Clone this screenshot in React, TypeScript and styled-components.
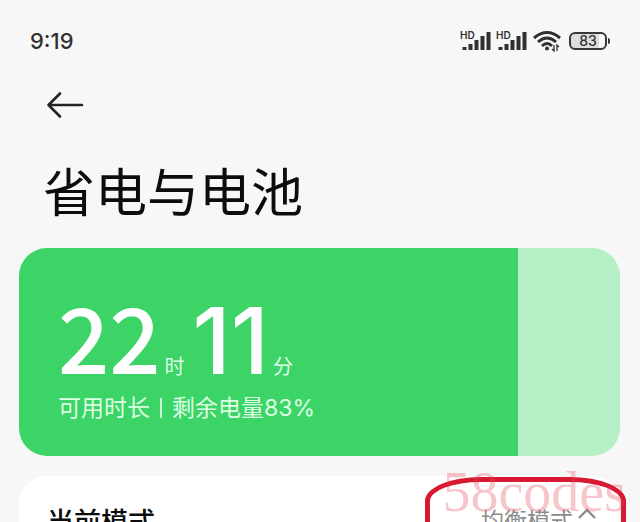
import React from "react";
import styled, { createGlobalStyle } from "styled-components";

const GlobalStyle = createGlobalStyle`
  * { box-sizing: border-box; }
  body { margin: 0; background: #f7f7f7; }
  button { border: 0; padding: 0; background: none; font: inherit; color: inherit; cursor: pointer; }
`;

const Page = styled.main`
  height: 100vh;
  overflow: hidden;
  background: #f7f7f7;
  color: #0c0c0c;
  font-family: "Noto Sans CJK SC", sans-serif;
`;

const StatusBar = styled.header`
  display: flex;
  align-items: center;
  justify-content: space-between;
  padding: 28px 30px 0;
  height: 54px;
  color: #303030;
`;

const Clock = styled.time`
  font: 500 22px/24px Inter, sans-serif;
`;

const StatusIcons = styled.div`
  display: flex;
  align-items: center;
  gap: 6px;
`;

const SignalBox = styled.div`
  position: relative;
  width: 30px;
  height: 22px;
`;

const SignalLabel = styled.span`
  position: absolute;
  left: -1px;
  top: 0;
  font: 600 10px/10px Inter, sans-serif;
`;

const Drawing = styled.svg`
  display: block;
  flex: none;
  fill: none;
  stroke: currentColor;
`;

const Battery = styled.div`
  display: flex;
  align-items: center;
  gap: 1px;
  margin-left: 2px;
`;

const BatteryBody = styled.span`
  width: 38px;
  height: 18px;
  border: 2px solid #383838;
  border-radius: 6px;
  background: linear-gradient(90deg, #dedede 83%, transparent 83%);
  text-align: center;
  font: 500 14px/14px Inter, sans-serif;
`;

const BatteryTip = styled.span`
  width: 2px;
  height: 6px;
  border-radius: 0 2px 2px 0;
  background: #383838;
`;

const Navigation = styled.nav`
  padding: 36px 46px 0;
`;

const BackButton = styled.button`
  display: block;
  color: #242424;
`;

const Title = styled.h1`
  margin: 0;
  padding: 34px 43px 0;
  font-size: 52px;
  line-height: 72px;
  font-weight: 400;
`;

const BatteryCard = styled.section`
  margin: 22px 20px 0 19px;
  padding: 45px 39px 32px;
  height: 208px;
  border-radius: 28px;
  background: linear-gradient(90deg, #3dd467 83%, #b5efc6 83%);
  color: #fff;
`;

const Duration = styled.div`
  display: flex;
  align-items: baseline;
  height: 98px;
  line-height: 84px;
`;

const Hours = styled.strong`
  font-size: 90px;
  font-weight: 500;
`;

const Minutes = styled.strong`
  margin-left: 8px;
  font-family: Inter, sans-serif;
  font-size: 92px;
  font-weight: 500;
`;

const Unit = styled.span`
  margin-left: 4px;
  font-size: 20px;
  color: #dcffe4;
`;

const Summary = styled.p`
  display: flex;
  align-items: center;
  gap: 10px;
  margin: 0;
  font-family: Inter, "Noto Sans CJK SC", sans-serif;
  font-size: 23px;
  line-height: 34px;
  color: #dcffe4;
`;

const Divider = styled.span`
  width: 2px;
  height: 20px;
  background: #c5f7d2;
`;

const ModeCard = styled.section`
  position: relative;
  display: flex;
  justify-content: space-between;
  margin: 20px 20px 0 19px;
  padding: 25px 24px 30px 28px;
  border-radius: 28px;
  background: #fff;
`;

const ModeLabel = styled.h2`
  margin: 0;
  font-size: 27px;
  line-height: 40px;
  font-weight: 500;
`;

const ModeButton = styled.button`
  display: flex;
  align-items: center;
  gap: 5px;
  height: 36px;
  font-size: 23px;
  color: #8c8c8c;
`;

const Highlight = styled.span`
  position: absolute;
  right: -6px;
  top: 1px;
  width: 201px;
  height: 90px;
  border: 5px solid #d71932;
  border-radius: 56px / 24px;
  pointer-events: none;
`;

const Watermark = styled.span`
  position: absolute;
  right: -6px;
  top: -16px;
  font: 400 56px/64px "Liberation Serif", serif;
  color: rgba(226, 65, 82, 0.3);
  pointer-events: none;
`;

function Signal() {
  return (
    <SignalBox>
      <SignalLabel>HD</SignalLabel>
      <Drawing width="30" height="22" viewBox="0 0 30 22" strokeWidth="4" strokeLinecap="butt">
        <path d="M3.5 17v3M9.5 14v6M15.5 10v10M21.5 6v14M27.5 2v18" />
      </Drawing>
    </SignalBox>
  );
}

function Wifi() {
  return (
    <Drawing width="28" height="22" viewBox="0 0 28 22" strokeWidth="3">
      <path d="M1 8Q14-3 27 8M5 12Q14 4 23 12M9 16Q14 11 19 16" />
      <circle cx="14" cy="18.5" r="2" fill="currentColor" stroke="none" />
      <path d="M21 15v6l-2-2M24 21v-6l2 2" strokeWidth="1.3" />
    </Drawing>
  );
}

export default function App() {
  return (
    <Page>
      <GlobalStyle />
      <StatusBar>
        <Clock>9:19</Clock>
        <StatusIcons>
          <Signal />
          <Signal />
          <Wifi />
          <Battery>
            <BatteryBody>83</BatteryBody>
            <BatteryTip />
          </Battery>
        </StatusIcons>
      </StatusBar>
      <Navigation>
        <BackButton aria-label="返回">
          <Drawing width="38" height="30" viewBox="0 0 38 30" strokeWidth="2.6" strokeLinecap="round" strokeLinejoin="round">
            <path d="M36 15H3M14 3.5L2.5 15L14 26.5" />
          </Drawing>
        </BackButton>
      </Navigation>
      <Title>省电与电池</Title>
      <BatteryCard>
        <Duration>
          <Hours>22</Hours>
          <Unit>时</Unit>
          <Minutes>11</Minutes>
          <Unit>分</Unit>
        </Duration>
        <Summary>
          <span>可用时长</span>
          <Divider />
          <span>剩余电量83%</span>
        </Summary>
      </BatteryCard>
      <ModeCard>
        <ModeLabel>当前模式</ModeLabel>
        <ModeButton aria-haspopup="listbox">
          均衡模式
          <Drawing width="18" height="24" viewBox="0 0 18 24" strokeWidth="2.4">
            <path d="M1 11L9 3L17 11" />
          </Drawing>
        </ModeButton>
        <Highlight />
        <Watermark>58codes</Watermark>
      </ModeCard>
    </Page>
  );
}
